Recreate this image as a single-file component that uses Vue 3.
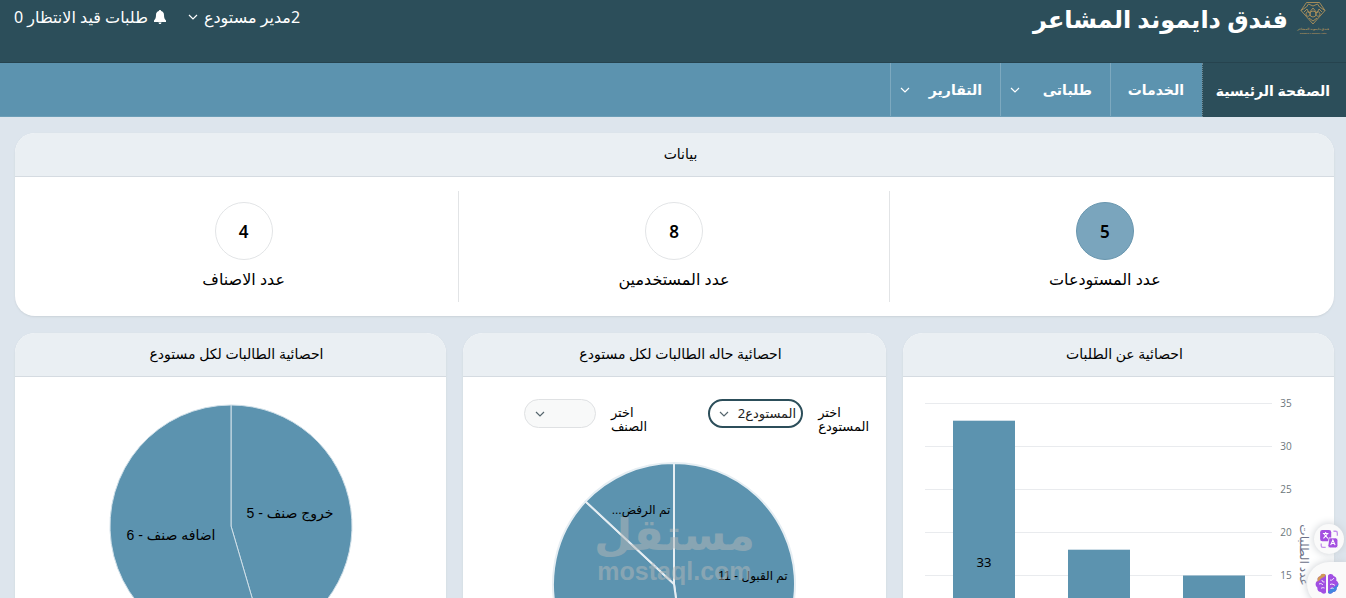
<template>
  <div class="page" dir="rtl">
    <header class="topbar">
      <a class="brand" href="#">
        <svg class="logo" viewBox="0 0 34 36" aria-hidden="true">
          <g fill="none" stroke="#b0925a" stroke-width="0.9">
            <path d="M10.500 2.500h13l5.500 8-12 13.500L5 10.500z" />
            <path d="M5 10.500l5.500-3.500 2-3 4.500 2 4.500-2 2 3L29 10.500M8 12l3-3 2 4 4-5 4 5 2-4 3 3" />
            <circle cx="17" cy="14" r="3" />
            <path d="M10 14c0-3 4-3 4 0s-4 3-4 0M20 14c0-3 4-3 4 0s-4 3-4 0M13 18l4 3 4-3" />
          </g>
          <text class="logo-ar" x="17" y="30" text-anchor="middle">فندق دايموند المشاعر</text>
          <text class="logo-en" x="17" y="34" text-anchor="middle">Diamond Al Mashaer Hotel</text>
        </svg>
        <h1>فندق دايموند المشاعر</h1>
      </a>
      <div class="user-bar">
        <button type="button" class="link-btn">
          <span>2مدير مستودع</span>
          <svg class="chevron" viewBox="0 0 10 6"><path d="M1 1l4 4 4-4" /></svg>
        </button>
        <button type="button" class="link-btn">
          <svg class="bell" viewBox="0 0 12 14">
            <path d="M6 0c.7 0 1.1.5 1.1 1.1C9 1.6 10 3.200 10 5c0 3.200.8 4.400 2 5.400V12H0v-1.600C1.200 9.400 2 8.200 2 5c0-1.800 1-3.400 2.900-3.900C4.900.5 5.300 0 6 0zM4.500 12.500h3C7.500 13.400 6.900 14 6 14s-1.500-.6-1.500-1.500z" />
          </svg>
          <span>طلبات قيد الانتظار 0</span>
        </button>
      </div>
    </header>

    <nav class="menu">
      <a
        v-for="item in menu"
        :key="item.label"
        href="#"
        :class="{ active: item.active, parent: item.children }"
      >
        <span>{{ item.label }}</span>
        <svg v-if="item.children" class="chevron" viewBox="0 0 10 6"><path d="M1 1l4 4 4-4" /></svg>
      </a>
    </nav>

    <main class="content">
      <section class="card">
        <h2>بيانات</h2>
        <div class="stats">
          <div v-for="stat in stats" :key="stat.label" class="stat">
            <span class="circle" :class="{ filled: stat.filled }">{{ stat.value }}</span>
            <span class="stat-label">{{ stat.label }}</span>
          </div>
        </div>
      </section>

      <div class="charts">
        <section class="card">
          <h2>احصائية عن الطلبات</h2>
          <svg class="chart" viewBox="0 0 431 370">
            <g v-for="tick in ticks" :key="tick">
              <line class="grid" x1="22" x2="369" :y1="yFor(tick)" :y2="yFor(tick)" />
              <text class="tick" x="383" :y="yFor(tick) + 3" text-anchor="middle">{{ tick }}</text>
            </g>
            <g v-for="(bar, i) in bars" :key="i">
              <rect class="bar" :x="50 + i * 115" :y="yFor(bar)" width="62" :height="yFor(0) - yFor(bar)" />
              <text class="bar-value" :x="81 + i * 115" :y="(yFor(0) + yFor(bar)) / 2 + 4" text-anchor="middle">{{ bar }}</text>
            </g>
            <text class="axis-title" transform="translate(397 178) rotate(90)" text-anchor="middle">عدد الطلبات</text>
          </svg>
        </section>

        <section class="card">
          <h2>احصائية حاله الطالبات لكل مستودع</h2>
          <form class="filters">
            <div class="field">
              <label for="store">اختر المستودع</label>
              <span class="select-wrap focused">
                <select id="store" v-model="store">
                  <option value="2">المستودع2</option>
                </select>
                <svg class="chevron" viewBox="0 0 10 6"><path d="M1 1l4 4 4-4" /></svg>
              </span>
            </div>
            <div class="field">
              <label for="item">اختر الصنف</label>
              <span class="select-wrap small">
                <select id="item" v-model="itemType">
                  <option value=""></option>
                </select>
                <svg class="chevron" viewBox="0 0 10 6"><path d="M1 1l4 4 4-4" /></svg>
              </span>
            </div>
          </form>
          <div class="pie-box">
            <svg class="chart" viewBox="0 0 423 270">
              <path v-for="(d, i) in statusSlices" :key="i" class="slice thick" :d="d" />
              <text class="pie-label small" x="290" y="138" text-anchor="middle">تم القبول - 11</text>
              <text class="pie-label small" x="178" y="72" text-anchor="middle">تم الرفض...</text>
            </svg>
            <div class="watermark">
              <span class="wm-ar">مستقل</span>
              <span class="wm-en">mostaql.com</span>
            </div>
          </div>
        </section>

        <section class="card">
          <h2>احصائية الطالبات لكل مستودع</h2>
          <svg class="chart" viewBox="0 0 431 300">
            <path v-for="(d, i) in typeSlices" :key="i" class="slice" :d="d" />
            <text class="pie-label" x="275" y="141" text-anchor="middle">خروج صنف - 5</text>
            <text class="pie-label" x="156" y="163" text-anchor="middle">اضافه صنف - 6</text>
          </svg>
        </section>
      </div>
    </main>

    <div class="widgets">
      <button type="button" class="translate-btn" aria-label="ترجمة">
        <svg viewBox="0 0 18 18">
          <rect x="1" y="1" width="10" height="10" rx="2" fill="#a44fe0" />
          <path d="M9 8h6a2 2 0 0 1 2 2v5a2 2 0 0 1-2 2h-5a2 2 0 0 1-2-2z" fill="#a44fe0" stroke="#fff" stroke-width="0.7" />
          <path d="M3.500 4h5M6 2.800V4M4 8.500l3.500-4M8 8.500l-3.500-4M10.500 14.500l2-4.500 2 4.500M11.200 13h2.600" fill="none" stroke="#fff" stroke-width="1" />
          <path d="M13 2h2a1.500 1.500 0 0 1 1.500 1.500V6M2 13v2a1.500 1.500 0 0 0 1.500 1.500H6" fill="none" stroke="#c490ec" stroke-width="1.200" />
        </svg>
      </button>
      <button type="button" class="brain-btn" aria-label="مساعد">
        <svg viewBox="0 0 24 22">
          <path d="M11 2.500C9 0 6 1 5.500 3 3 3.500 2 5.500 2.800 7.500 0 9 0 13 2.300 14.500 2 17.500 4 19 6 19c1.500 2.500 5 2 5 0z" fill="#a14fe3" />
          <path d="M10.500 1.500C8 0 6 1 5.500 3 3 3.500 2 5.500 2.800 7.500L1.500 9C4 8.500 5 6 7 5s3.500-1.500 3.500-3.500z" fill="#d19a55" />
          <path d="M13 2.500C15 0 18 1 18.500 3c2.500.5 3.500 2.500 2.700 4.500C24 9 24 13 21.700 14.500 22 17.500 20 19 18 19c-1.500 2.500-5 2-5 0z" fill="#a14fe3" />
          <path d="M23.300 10c.4 2-.3 3.600-1.600 4.500.3 3-1.700 4.500-3.700 4.500-1.500 2.500-5 2-5 0 2-1 2-3 4-4s5-2 6.300-5z" fill="#4187e0" />
          <path d="M4 11c2-1 3 0 4 1M6 15.500c1-1 2-1 3.500-.5M7 7c0 1.500 1 2 2.500 2M15 7c2 1 3-1 4-2M15 11.500c2-1 4 0 5 1M15.500 16c1-1.500 2-1 3-.5" fill="none" stroke="#fff" stroke-width="0.900" />
        </svg>
      </button>
    </div>
  </div>
</template>

<script setup>
import { ref } from 'vue'

const store = ref('2')
const itemType = ref('')

const menu = [
  { label: 'الصفحة الرئيسية', active: true },
  { label: 'الخدمات' },
  { label: 'طلباتى', children: true },
  { label: 'التقارير', children: true }
]

const stats = [
  { label: 'عدد المستودعات', value: 5, filled: true },
  { label: 'عدد المستخدمين', value: 8 },
  { label: 'عدد الاصناف', value: 4 }
]

// bar chart
const ticks = [35, 30, 25, 20, 15, 10, 5, 0]
const bars = [33, 18, 15]
const yFor = (value) => 26.5 + ((35 - value) / 5) * 43

// Build pie slice paths, clockwise from the top
const pie = (values, cx, cy, r) => {
  const total = values.reduce((a, b) => a + b, 0)
  let angle = 0
  return values.map((v) => {
    const start = angle
    angle += (v / total) * Math.PI * 2
    const x1 = cx + r * Math.sin(start)
    const y1 = cy - r * Math.cos(start)
    const x2 = cx + r * Math.sin(angle)
    const y2 = cy - r * Math.cos(angle)
    const large = angle - start > Math.PI ? 1 : 0
    return `M${cx} ${cy}L${x1} ${y1}A${r} ${r} 0 ${large} 1 ${x2} ${y2}Z`
  })
}

const statusSlices = pie([11, 9, 3], 211, 142, 121)
const typeSlices = pie([5, 6], 216, 149, 121)
</script>

<style>
body {
  background: #dde5ed;
}
</style>

<style scoped>
* {
  box-sizing: border-box;
}

.page {
  height: 100vh;
  overflow: hidden;
  background: #dde5ed;
  color: #000;
  font-family: "Noto Sans", "DejaVu Sans", sans-serif;
}

.topbar {
  display: flex;
  justify-content: space-between;
  align-items: flex-start;
  height: 63px;
  padding: 0 16px 0 14px;
  background: #2c4e5a;
  border-bottom: 1px solid #26434e;
}

.brand {
  display: flex;
  align-items: flex-start;
  gap: 8px;
  color: #fff;
  text-decoration: none;
}

.brand h1 {
  margin: 0;
  font-size: 24px;
  line-height: 38px;
  white-space: nowrap;
}

.logo {
  width: 34px;
  height: 36px;
}

.logo-ar {
  fill: #b0925a;
  font-size: 3px;
  font-weight: 700;
}

.logo-en {
  fill: #b0925a;
  font-size: 2px;
  font-weight: 700;
}

.user-bar {
  display: flex;
  gap: 22px;
}

.link-btn {
  display: flex;
  align-items: center;
  gap: 6px;
  padding: 0;
  border: 0;
  background: none;
  color: #fff;
  font-family: inherit;
  font-size: 16px;
  line-height: 34px;
}

.chevron {
  width: 10px;
  height: 6px;
  fill: none;
  stroke: currentColor;
  stroke-width: 1.2;
}

.bell {
  width: 12px;
  height: 14px;
  fill: #fff;
}

.menu {
  display: flex;
  height: 54px;
  background: #5c93af;
  border-bottom: 1px solid #6c9eb7;
}

.menu a {
  display: flex;
  align-items: center;
  justify-content: space-between;
  padding: 0 18px;
  border-left: 1px solid #7da9bf;
  color: #fff;
  font-size: 14px;
  font-weight: 700;
  text-decoration: none;
  white-space: nowrap;
}

.menu a.active {
  width: 144px;
  height: 54px;
  padding-right: 16px;
  background: #2c4e5a;
  border-left: 1px dotted #6c8792;
}

.menu a:not(.active):not(.parent) {
  width: 92px;
}

.menu a.parent {
  width: 110px;
  padding-left: 9px;
}

.content {
  display: flex;
  flex-direction: column;
  gap: 17px;
  padding: 16px 12px 0 15px;
}

.card {
  overflow: hidden;
  background: #fff;
  border-radius: 20px;
  box-shadow: 0 1px 2px #cbd3da;
}

.card h2 {
  height: 44px;
  margin: 0;
  padding-left: 12px;
  background: #eaeff3;
  border-bottom: 1px solid #d5dbe1;
  font-size: 14px;
  font-weight: 400;
  line-height: 41px;
  text-align: center;
}

.stats {
  display: grid;
  grid-template-columns: repeat(3, 1fr);
  padding: 14px;
}

.stat {
  display: flex;
  flex-direction: column;
  align-items: center;
  gap: 7px;
  height: 111px;
  padding-top: 11px;
}

.stat + .stat {
  border-right: 1px solid #e2e4e6;
}

.circle {
  display: flex;
  align-items: center;
  justify-content: center;
  width: 58px;
  height: 58px;
  border: 1px solid #e2e4e6;
  border-radius: 50%;
  font-size: 17px;
  font-weight: 600;
}

.circle.filled {
  background: #7aa5bd;
  border-color: #6996ae;
}

.stat-label {
  font-size: 16px;
  line-height: 24px;
}

.charts {
  display: grid;
  grid-template-columns: 431fr 423fr 431fr;
  gap: 17px;
}

.chart {
  display: block;
  width: 100%;
  direction: rtl;
}

.grid {
  stroke: #e9ebee;
}

.tick {
  direction: ltr;
  fill: #6d777c;
  font-family: "Open Sans", sans-serif;
  font-size: 10px;
}

.bar,
.slice {
  fill: #5c93af;
}

.bar-value {
  font-size: 13px;
}

.axis-title {
  fill: #6b6f86;
  font-size: 12px;
}

.slice {
  stroke: #cfdfe8;
  stroke-width: 1;
}

.slice.thick {
  stroke: #e6eef3;
  stroke-width: 2;
}

.pie-label {
  font-family: "Liberation Sans", "DejaVu Sans", sans-serif;
  font-size: 14px;
}

.pie-label.small {
  font-size: 12px;
}

.filters {
  display: flex;
  gap: 61px;
  padding: 22px 17px 0;
}

.field {
  display: flex;
  align-items: flex-start;
  gap: 15px;
}

.field label {
  width: min-content;
  padding-top: 6px;
  font-size: 13px;
  line-height: 14px;
  text-align: left;
}

.select-wrap {
  position: relative;
  display: block;
  width: 95px;
  color: #56666e;
}

.select-wrap.small {
  width: 72px;
}

.select-wrap .chevron {
  position: absolute;
  top: 12px;
  left: 11px;
  pointer-events: none;
}

.select-wrap select {
  display: block;
  width: 100%;
  height: 29px;
  padding: 0 5px 2px 22px;
  appearance: none;
  background: #f8f9f9;
  border: 1px solid #dfe1e3;
  border-radius: 15px;
  color: #222;
  font-family: inherit;
  font-size: 13px;
}

.select-wrap.focused select {
  background: #fff;
  border: 2px solid #2c4e5a;
}

.pie-box {
  position: relative;
  margin-top: 9px;
}

.watermark {
  position: absolute;
  top: 63px;
  left: 131px;
  display: flex;
  flex-direction: column;
  align-items: center;
  color: #b4b8b8;
  font-weight: 700;
  opacity: 0.5;
  pointer-events: none;
}

.wm-ar {
  font-size: 44px;
  line-height: 56px;
}

.wm-en {
  font-family: "Liberation Sans", sans-serif;
  font-size: 25px;
  line-height: 20px;
}

.widgets {
  position: fixed;
  right: 0;
  bottom: -8px;
  display: flex;
  flex-direction: column;
  align-items: flex-start;
  gap: 8px;
}

.widgets button {
  display: flex;
  align-items: center;
  padding: 0;
  border: 0;
  background: #fafafa;
  box-shadow: 0 0 8px #c9cdd2;
}

.translate-btn {
  justify-content: center;
  width: 30px;
  height: 30px;
  margin-right: 2px;
  border-radius: 50%;
}

.translate-btn svg {
  width: 20px;
  height: 20px;
}

.brain-btn {
  justify-content: center;
  width: 39px;
  height: 44px;
  border-radius: 22px 0 0 22px;
}

.brain-btn svg {
  width: 24px;
  height: 22px;
}
</style>
